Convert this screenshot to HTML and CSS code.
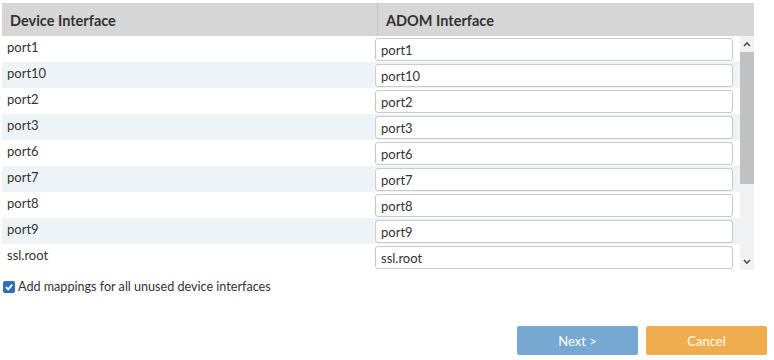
FILE: index.html
```html
<!DOCTYPE html>
<html>
<head>
<meta charset="utf-8">
<link rel="stylesheet" href="styles.css">
</head>
<body>
<div class="page">
  <div class="grid">
    <div class="head">
      <div class="hcell">Device Interface</div>
      <div class="hcell sep">ADOM Interface</div>
    </div>
    <div class="body">
      <div class="rows">
        <div class="row"><div class="name">port1</div><div class="val"><input class="inp" value="port1"></div></div>
        <div class="row alt"><div class="name">port10</div><div class="val"><input class="inp" value="port10"></div></div>
        <div class="row"><div class="name">port2</div><div class="val"><input class="inp" value="port2"></div></div>
        <div class="row alt"><div class="name">port3</div><div class="val"><input class="inp" value="port3"></div></div>
        <div class="row"><div class="name">port6</div><div class="val"><input class="inp" value="port6"></div></div>
        <div class="row alt"><div class="name">port7</div><div class="val"><input class="inp" value="port7"></div></div>
        <div class="row"><div class="name">port8</div><div class="val"><input class="inp" value="port8"></div></div>
        <div class="row alt"><div class="name">port9</div><div class="val"><input class="inp" value="port9"></div></div>
        <div class="row"><div class="name">ssl.root</div><div class="val"><input class="inp" value="ssl.root"></div></div>
      </div>
      <div class="scrollbar">
        <div class="arrow"><svg width="8" height="6" viewBox="0 0 8 6"><path d="M1 5 L4 2 L7 5" fill="none" stroke="#505050" stroke-width="1.6"/></svg></div>
        <div class="thumb"></div>
        <div class="track"></div>
        <div class="arrow"><svg width="8" height="6" viewBox="0 0 8 6"><path d="M1 1 L4 4 L7 1" fill="none" stroke="#505050" stroke-width="1.6"/></svg></div>
      </div>
    </div>
  </div>
  <label class="check">
    <span class="box"><svg width="10" height="10" viewBox="0 0 10 10"><path d="M2 5.2 L4.2 7.4 L8.2 2.6" fill="none" stroke="#fff" stroke-width="1.8"/></svg></span>
    <span>Add mappings for all unused device interfaces</span>
  </label>
  <div class="footer">
    <button class="btn next">Next &gt;</button>
    <button class="btn cancel">Cancel</button>
  </div>
</div>
</body>
</html>
```
FILE: styles.css
```css
html, body {
  margin: 0;
  padding: 0;
  background: #fff;
}
body {
  font-family: Lato, "Open Sans", sans-serif;
  font-size: 13px;
  color: #333;
}
.page {
  width: 774px;
  height: 360px;
  padding: 3px 0 0 2px;
  box-sizing: border-box;
  display: flex;
  flex-direction: column;
}
.grid {
  width: 752px;
}
.head {
  display: grid;
  grid-template-columns: 375px 1fr;
  height: 33px;
  background: #d6d6d6;
}
.hcell {
  font-weight: bold;
  font-size: 14.5px;
  display: flex;
  align-items: center;
  padding-left: 8px;
  padding-top: 1px;
}
.hcell.sep {
  border-left: 1px solid #c4c4c4;
}
.body {
  display: flex;
  height: 234px;
}
.rows {
  width: 738px;
  display: flex;
  flex-direction: column;
}
.row {
  display: grid;
  grid-template-columns: 372px 1fr;
  height: 26px;
  background: #fff;
}
.row.alt {
  background: #eef3f7;
}
.name {
  padding: 1px 0 0 5px;
  line-height: 20px;
}
.val {
  border-left: 1px solid #f6f8fa;
  padding: 2px 0 0 0;
}
.inp {
  display: block;
  width: 358px;
  height: 23px;
  box-sizing: border-box;
  border: 1px solid #c9c9c9;
  border-radius: 3px;
  background: #fff;
  font-family: Lato, "Open Sans", sans-serif;
  font-size: 13px;
  color: #333;
  padding: 0 5px;
  margin: 0;
  outline: none;
}
.scrollbar {
  width: 14px;
  background: #f1f1f1;
  display: flex;
  flex-direction: column;
}
.arrow {
  height: 16px;
  display: flex;
  align-items: center;
  justify-content: center;
}
.thumb {
  height: 132px;
  background: #c1c1c1;
}
.track {
  flex: 1;
}
.check {
  display: flex;
  align-items: center;
  gap: 3px;
  margin-top: 9px;
  margin-left: 1px;
  line-height: 16px;
  font-size: 12.6px;
}
.box {
  width: 12px;
  height: 12px;
  border-radius: 2px;
  background: #2f6fb8;
  display: flex;
  align-items: center;
  justify-content: center;
}
.footer {
  display: flex;
  justify-content: flex-end;
  gap: 8px;
  margin-top: 31px;
  padding-right: 7px;
}
.btn {
  width: 121px;
  height: 29px;
  border: none;
  border-radius: 2px;
  color: #fff;
  font-family: Lato, "Open Sans", sans-serif;
  font-size: 13px;
  padding: 0;
}
.next {
  background: #76a8d1;
}
.cancel {
  background: #f0ad4e;
}
```
